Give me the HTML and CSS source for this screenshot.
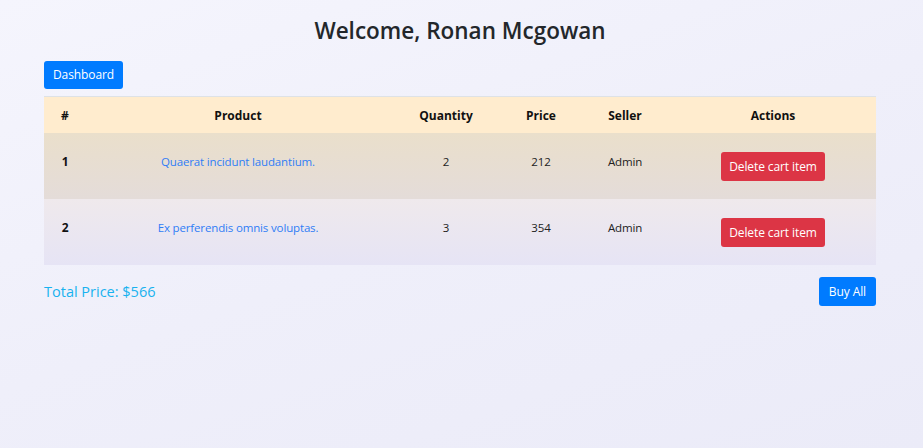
FILE: index.html
```html
<!DOCTYPE html>
<html lang="en">
<head>
<meta charset="utf-8">
<title>Cart</title>
<link rel="stylesheet" href="styles.css">
</head>
<body>
<main class="page">
  <h2 class="title">Welcome, Ronan Mcgowan</h2>
  <div class="toolbar"><a class="btn btn-primary" href="#">Dashboard</a></div>
  <table class="cart">
    <thead>
      <tr>
        <th class="c-num">#</th>
        <th class="c-prod">Product</th>
        <th class="c-qty">Quantity</th>
        <th class="c-price">Price</th>
        <th class="c-seller">Seller</th>
        <th class="c-act">Actions</th>
      </tr>
    </thead>
    <tbody>
      <tr class="row-a">
        <td class="num">1</td>
        <td><a class="plink" href="#">Quaerat incidunt laudantium.</a></td>
        <td>2</td>
        <td>212</td>
        <td>Admin</td>
        <td class="act"><button class="btn btn-danger">Delete cart item</button></td>
      </tr>
      <tr class="row-b">
        <td class="num">2</td>
        <td><a class="plink" href="#">Ex perferendis omnis voluptas.</a></td>
        <td>3</td>
        <td>354</td>
        <td>Admin</td>
        <td class="act"><button class="btn btn-danger">Delete cart item</button></td>
      </tr>
    </tbody>
  </table>
  <div class="footer">
    <span class="total">Total Price: $566</span>
    <button class="btn btn-primary buy">Buy All</button>
  </div>
</main>
</body>
</html>
```

FILE: styles.css
```css
* { box-sizing: border-box; }
html, body { margin: 0; height: 100%; }
body {
  font-family: "Open Sans", "Noto Sans", sans-serif;
  color: #212529;
  background: linear-gradient(160deg, #f5f5fd 0%, #efeffa 50%, #ebebf8 100%);
  font-size: 11.5px;
}
.page {
  padding: 14px 47px 0 44px;
}
.title {
  margin: 0;
  text-align: center;
  font-size: 22.5px;
  font-weight: 600;
  line-height: 33px;
  color: #23272b;
}
.toolbar {
  margin-top: 14px;
  margin-bottom: 7px;
}
.btn {
  display: inline-block;
  border: 0;
  border-radius: 3px;
  font-family: inherit;
  font-size: 12px;
  line-height: 18px;
  padding: 5px 8px;
  color: #fff;
  text-decoration: none;
  cursor: pointer;
  letter-spacing: -0.1px;
}
.toolbar .btn { padding: 5px 9px 5px 9px; line-height: 18px; }
.btn-primary { background: #007bff; }
.btn-danger { background: #dc3545; padding: 6px 8px 5px; }
.footer .buy { padding: 6px 10px 5px; height: 29px; }
.cart {
  width: 100%;
  border-collapse: collapse;
  text-align: center;
}
.cart thead tr {
  background: #ffecce;
  border-top: 1px solid #dee2e6;
}
.cart th {
  font-weight: 700;
  padding: 9px 8px 8px;
  line-height: 19px;
  color: #111;
  font-size: 12px;
}
.cart td {
  padding: 19px 8px 17px;
  line-height: 20px;
  vertical-align: top;
  color: #222;
  letter-spacing: -0.15px;
}
.cart td.num { font-weight: 700; color: #111; font-size: 12px; }
.cart td.act { padding-top: 19px; padding-bottom: 18px; }
.c-num { width: 42px; }
.c-prod { width: 304px; }
.c-qty { width: 112px; }
.c-price { width: 78px; }
.c-seller { width: 90px; }
.row-a { background: linear-gradient(180deg, #eadfcb 0%, #e4dcd9 100%); }
.row-b { background: linear-gradient(180deg, #efe9ec 0%, #e6e4f5 100%); }
.plink { color: #2f7df6; text-decoration: none; }
.footer {
  display: flex;
  justify-content: space-between;
  align-items: center;
  margin-top: 12px;
}
.total {
  font-size: 14.5px;
  color: #18b2ef;
}
```
